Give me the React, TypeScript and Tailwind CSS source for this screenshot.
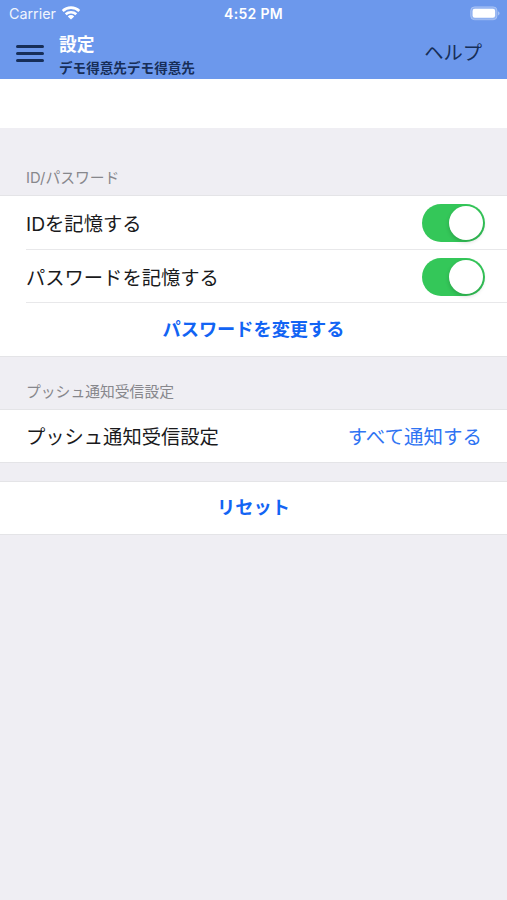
import { useState } from "react";
import type { ReactNode } from "react";

const TEXTS = {
  title: "設定",
  customer: "デモ得意先デモ得意先",
  help: "ヘルプ",
  account: "ID/パスワード",
  rememberId: "IDを記憶する",
  rememberPassword: "パスワードを記憶する",
  changePassword: "パスワードを変更する",
  push: "プッシュ通知受信設定",
  pushValue: "すべて通知する",
  reset: "リセット",
};

function StatusBar() {
  return (
    <div className="grid h-[27px] grid-cols-3 items-center text-white">
      <div className="flex items-center gap-[5px] pl-[9px]">
        <span className="pt-px text-[14.3px] leading-none opacity-90">Carrier</span>
        <svg width="20" height="14" viewBox="0 0 20 14">
          <path d="M10 13.6 6.8 10.4a4.6 4.6 0 0 1 6.4 0Z" fill="currentColor" />
          <path d="M4.7 8.3a7.7 7.7 0 0 1 10.6 0" fill="none" stroke="currentColor" strokeWidth="2.6" />
          <path d="M1.7 5a12 12 0 0 1 16.6 0" fill="none" stroke="currentColor" strokeWidth="2.6" />
        </svg>
      </div>
      <span className="pt-px text-center text-[14px] leading-none font-semibold tracking-[0.3px]">4:52 PM</span>
      <svg width="30" height="15" viewBox="0 0 30 15" className="mr-[7px] justify-self-end">
        <rect x="0.6" y="0.8" width="26.5" height="13" rx="4" fill="#fff" fillOpacity="0.25" stroke="#fff" strokeOpacity="0.25" />
        <rect x="2.6" y="2.8" width="22.5" height="9" rx="2.2" fill="#fff" />
        <path d="M28.2 5.2c1.8.8 1.8 3.4 0 4.2Z" fill="#fff" fillOpacity="0.5" />
      </svg>
    </div>
  );
}

function Header() {
  return (
    <header className="h-[79px] bg-[#6c98ec]">
      <StatusBar />
      <div className="flex h-[52px] items-center pr-[25px] pl-4 text-[#172e58]">
        <button aria-label="メニュー" className="mr-[15px] flex w-7 flex-col gap-[4.5px] pt-px">
          <span className="h-[2.5px] rounded-full bg-current" />
          <span className="h-[2.5px] rounded-full bg-current" />
          <span className="h-[2.5px] rounded-full bg-current" />
        </button>
        <div className="grow pt-[6px]">
          <h1 className="text-[17.7px] leading-[25px] font-bold text-white">{TEXTS.title}</h1>
          <p className="text-[13.6px] leading-[23px] font-bold">{TEXTS.customer}</p>
        </div>
        <button className="pt-0.5 text-[19.3px] leading-none">{TEXTS.help}</button>
      </div>
    </header>
  );
}

function Toggle() {
  const [on, setOn] = useState(true);

  return (
    <button
      role="switch"
      aria-checked={on}
      onClick={() => setOn(!on)}
      className={`flex h-[38px] w-[63px] items-center rounded-full p-0.5 ${on ? "justify-end bg-[#34c759]" : "justify-start bg-[#e9e9eb]"}`}
    >
      <span className="size-[34px] rounded-full bg-white shadow-[0_2px_4px_rgba(0,0,0,0.18)]" />
    </button>
  );
}

function SectionLabel({ children }: { children: ReactNode }) {
  return <h2 className="pl-[26px] text-[14.8px] leading-5 text-[#87878c]">{children}</h2>;
}

export default function App() {
  return (
    <main className="min-h-screen bg-[#efeef3] font-['Inter','Noto_Sans_CJK_JP',sans-serif] text-[#1a1a1c]">
      <Header />
      <div className="h-[49px] bg-white" />

      {/* ID / password */}
      <div className="flex h-[67px] items-end pb-[7px]">
        <SectionLabel>{TEXTS.account}</SectionLabel>
      </div>
      <section className="h-[162px] border-y border-[#e4e4e7] bg-white text-[19.3px]">
        <div className="ml-[26px] flex h-[54px] items-center justify-between border-b border-[#e8e8ea] pr-[22px]">
          <span className="pt-1 leading-none">{TEXTS.rememberId}</span>
          <Toggle />
        </div>
        <div className="ml-[26px] flex h-[53px] items-center justify-between border-b border-[#e8e8ea] pt-px pr-[22px]">
          <span className="pt-[5px] leading-none">{TEXTS.rememberPassword}</span>
          <Toggle />
        </div>
        <button className="h-[53px] w-full text-[18.2px] leading-none font-bold text-[#1264f4]">
          {TEXTS.changePassword}
        </button>
      </section>

      {/* Push notifications */}
      <div className="flex h-[52px] items-end pb-[7px]">
        <SectionLabel>{TEXTS.push}</SectionLabel>
      </div>
      <section className="flex h-[54px] items-center justify-between border-y border-[#e4e4e7] bg-white pt-1 pr-[25px] pl-[26px] text-[19.3px] leading-none">
        <span>{TEXTS.push}</span>
        <button className="text-[19.5px] text-[#2f74f3]">{TEXTS.pushValue}</button>
      </section>

      {/* Reset */}
      <section className="mt-[18px] h-[54px] border-y border-[#e4e4e7] bg-white">
        <button className="h-full w-full pb-0.5 text-[18.2px] leading-none font-bold text-[#1264f4]">
          {TEXTS.reset}
        </button>
      </section>
    </main>
  );
}
